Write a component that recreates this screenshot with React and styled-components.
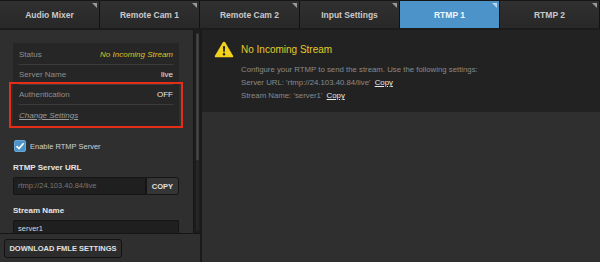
import styled, { createGlobalStyle } from "styled-components";

const GlobalStyle = createGlobalStyle`
  html, body {
    margin: 0;
    padding: 0;
    background: #2f2f2f;
  }
  * {
    box-sizing: border-box;
  }
`;

export default function App() {
  const tabs = ["Audio Mixer", "Remote Cam 1", "Remote Cam 2", "Input Settings", "RTMP 1", "RTMP 2"];

  return (
    <>
      <GlobalStyle />
      <Frame>
        <TabBar>
          {tabs.map((t) => (
            <Tab key={t} $active={t === "RTMP 1"}>
              {t}
            </Tab>
          ))}
        </TabBar>
        <Body>
          <LeftPanel>
            <ScrollArea>
              <LeftContent>
                <InfoCard>
                  <InfoRow>
                    <InfoLabel>Status</InfoLabel>
                    <StatusValue>No Incoming Stream</StatusValue>
                  </InfoRow>
                  <InfoRow>
                    <InfoLabel>Server Name</InfoLabel>
                    <InfoValue>live</InfoValue>
                  </InfoRow>
                  <Highlight>
                    <InfoRow>
                      <InfoLabel>Authentication</InfoLabel>
                      <InfoValue>OFF</InfoValue>
                    </InfoRow>
                    <InfoRow $last>
                      <SettingsLink>Change Settings</SettingsLink>
                    </InfoRow>
                  </Highlight>
                </InfoCard>

                <CheckRow>
                  <CheckBox>
                    <svg width="10" height="10" viewBox="0 0 10 10">
                      <path d="M1.5 5.2 L4 7.6 L8.6 2.2" fill="none" stroke="#fff" strokeWidth="1.6" />
                    </svg>
                  </CheckBox>
                  <CheckLabel>Enable RTMP Server</CheckLabel>
                </CheckRow>

                <FieldLabel>RTMP Server URL</FieldLabel>
                <FieldRow>
                  <TextField $muted>rtmp://24.103.40.84/live</TextField>
                  <CopyButton>COPY</CopyButton>
                </FieldRow>

                <FieldLabel>Stream Name</FieldLabel>
                <FieldRow>
                  <TextField>server1</TextField>
                </FieldRow>
              </LeftContent>
              <ScrollTrack>
                <ScrollThumb />
              </ScrollTrack>
            </ScrollArea>
            <BottomBar>
              <DownloadButton>DOWNLOAD FMLE SETTINGS</DownloadButton>
            </BottomBar>
          </LeftPanel>

          <RightPanel>
            <Notice>
              <WarnIcon viewBox="0 0 20 17" width="20" height="17">
                <path d="M10 0.8 Q10.8 0.8 11.3 1.6 L19.2 15 Q19.5 16.2 18.4 16.2 L1.6 16.2 Q0.5 16.2 0.8 15 L8.7 1.6 Q9.2 0.8 10 0.8 Z" fill="#f3d21b" />
                <path d="M8.9 5.2 L11.1 5.2 L10.6 11.2 L9.4 11.2 Z" fill="#1e1e1e" />
                <circle cx="10" cy="13.3" r="1.2" fill="#1e1e1e" />
              </WarnIcon>
              <NoticeText>
                <NoticeTitle>No Incoming Stream</NoticeTitle>
                <NoticeLine>Configure your RTMP to send the stream. Use the following settings:</NoticeLine>
                <NoticeLine>
                  Server URL: 'rtmp://24.103.40.84/live' <CopyLink>Copy</CopyLink>
                </NoticeLine>
                <NoticeLine>
                  Stream Name: 'server1' <CopyLink>Copy</CopyLink>
                </NoticeLine>
              </NoticeText>
            </Notice>
          </RightPanel>
        </Body>
      </Frame>
    </>
  );
}

const Frame = styled.div`
  width: 600px;
  height: 262px;
  display: flex;
  flex-direction: column;
  overflow: hidden;
  background: #2f2f2f;
  font-family: "Liberation Sans", Arial, sans-serif;
`;

const TabBar = styled.div`
  height: 30px;
  display: flex;
  background: #161616;
  border-bottom: 2px solid #1b1b1b;
  padding-top: 1px;
`;

const Tab = styled.div`
  position: relative;
  flex: 1;
  display: flex;
  align-items: center;
  justify-content: center;
  background: ${(p) => (p.$active ? "#4b93c8" : "linear-gradient(#303030, #282828)")};
  border-right: 1px solid #121212;
  color: ${(p) => (p.$active ? "#f2f6fa" : "#c9c9c9")};
  font-size: 8.5px;
  font-weight: bold;
  padding-top: 1px;

  &::after {
    content: "";
    position: absolute;
    top: 2px;
    right: 2px;
    border-top: 5px solid ${(p) => (p.$active ? "#b9d6ec" : "#9a9a9a")};
    border-left: 5px solid transparent;
  }
`;

const Body = styled.div`
  flex: 1;
  display: flex;
  min-height: 0;
`;

const LeftPanel = styled.div`
  width: 202px;
  display: flex;
  flex-direction: column;
  border-right: 2px solid #1a1a1a;
`;

const ScrollArea = styled.div`
  flex: 1;
  display: flex;
  min-height: 0;
  overflow: hidden;
`;

const LeftContent = styled.div`
  flex: 1;
  padding: 13px 14px 0 13px;
  background: #2f2f2f;
`;

const ScrollTrack = styled.div`
  width: 9px;
  padding: 3px 1px 0 2px;
  background: #1d1d1d;
  border-left: 1px solid #161616;
  display: flex;
  flex-direction: column;
  position: relative;

  &::after {
    content: "";
    position: absolute;
    left: 2px;
    right: 1px;
    top: 131px;
    bottom: 2px;
    border-radius: 3px;
    background: #262626;
  }
`;

const ScrollThumb = styled.div`
  height: 128px;
  border-radius: 3px;
  background: #4a4a4a;
  border: 1px solid #3a3a3a;
`;

const InfoCard = styled.div`
  width: 166px;
  background: #262626;
  padding: 2px 0 1px;
`;

const Highlight = styled.div`
  outline: 2px solid #e52d18;
  outline-offset: 1px;
  margin: 0 -1px 0 -1px;
  padding: 0 1px;
`;

const InfoRow = styled.div`
  height: 20px;
  margin: 0 6px;
  display: flex;
  align-items: center;
  justify-content: space-between;
  border-bottom: ${(p) => (p.$last ? "none" : "1px solid #3b3b3b")};
`;

const InfoLabel = styled.span`
  font-size: 8px;
  color: #8e8e8e;
`;

const InfoValue = styled.span`
  font-size: 8px;
  color: #e6e6e6;
`;

const StatusValue = styled.span`
  font-size: 8px;
  font-style: italic;
  color: #d6c42a;
`;

const SettingsLink = styled.span`
  font-size: 8px;
  font-style: italic;
  color: #9a9a9a;
  text-decoration: underline;
`;

const CheckRow = styled.div`
  display: flex;
  align-items: center;
  gap: 4px;
  margin: 14px 0 0 1px;
`;

const CheckBox = styled.div`
  width: 12px;
  height: 12px;
  border-radius: 2px;
  background: #4b93c8;
  border: 1px solid #6aa6d4;
  display: flex;
  align-items: center;
  justify-content: center;
`;

const CheckLabel = styled.span`
  font-size: 7.5px;
  color: #cfcfcf;
`;

const FieldLabel = styled.div`
  font-size: 8px;
  font-weight: bold;
  color: #e6e6e6;
  margin: 11px 0 5px;
`;

const FieldRow = styled.div`
  display: flex;
  width: 166px;
  height: 18px;
`;

const TextField = styled.div`
  flex: 1;
  display: flex;
  align-items: flex-start;
  padding: 3px 0 0 4px;
  background: #1f1f1f;
  border: 1px solid #151515;
  border-radius: 2px 0 0 2px;
  font-size: 7.5px;
  color: ${(p) => (p.$muted ? "#777" : "#d8d8d8")};
`;

const CopyButton = styled.div`
  width: 33px;
  display: flex;
  align-items: center;
  justify-content: center;
  background: #353535;
  border: 1px solid #151515;
  border-radius: 0 3px 3px 0;
  font-size: 7.5px;
  font-weight: bold;
  color: #e0e0e0;
`;

const BottomBar = styled.div`
  height: 29px;
  background: #2f2f2f;
  border-top: 1px solid #151515;
  padding: 5px 0 0 4px;
`;

const DownloadButton = styled.div`
  width: 118px;
  height: 19px;
  display: flex;
  align-items: center;
  justify-content: center;
  background: #2d2d2d;
  border: 1px solid #121212;
  border-radius: 3px;
  font-size: 7.5px;
  font-weight: bold;
  color: #e0e0e0;
`;

const RightPanel = styled.div`
  flex: 1;
  display: flex;
  flex-direction: column;
  background: #2f2f2f;
`;

const Notice = styled.div`
  height: 82px;
  background: #222222;
  display: flex;
  align-items: flex-start;
  padding: 11px 0 0 12px;
  gap: 7px;
`;

const WarnIcon = styled.svg`
  flex-shrink: 0;
`;

const NoticeText = styled.div`
  display: flex;
  flex-direction: column;
  padding-top: 3px;
`;

const NoticeTitle = styled.div`
  font-size: 10px;
  color: #e2cb2a;
  margin-bottom: 8px;
`;

const NoticeLine = styled.div`
  font-size: 7.8px;
  color: #8a8a8a;
  line-height: 13px;
`;

const CopyLink = styled.span`
  color: #e8e8e8;
  text-decoration: underline;
  margin-left: 2px;
`;
